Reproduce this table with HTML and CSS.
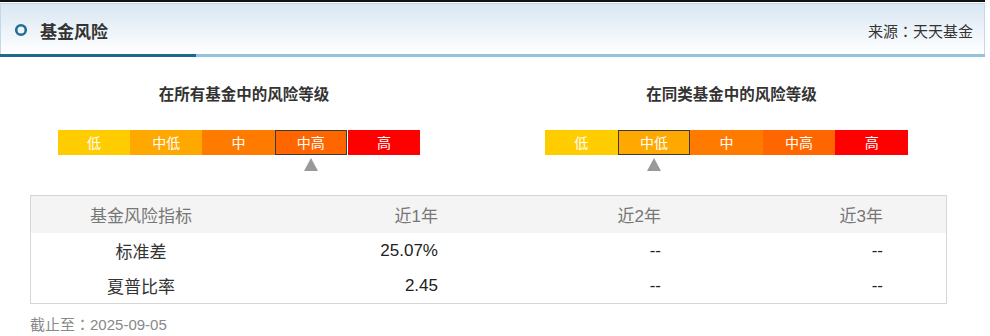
FILE: index.html
```html
<!DOCTYPE html>
<html lang="zh-CN">
<head>
<meta charset="utf-8">
<title>基金风险</title>
<link rel="stylesheet" href="styles.css">
</head>
<body>
<div class="page">
  <div class="topline"></div>
  <div class="header">
    <div class="title">
      <svg class="ring" width="14" height="14" viewBox="0 0 14 14"><circle cx="7" cy="7" r="4.8" fill="none" stroke="#246d92" stroke-width="2.6"/></svg>
      <span>基金风险</span>
    </div>
    <div class="source">来源<span class="colon" lang="zh-TW">：</span>天天基金</div>
  </div>
  <div class="rule"><div class="rule-dark"></div></div>

  <div class="levels">
    <div class="level">
      <div class="level-title">在所有基金中的风险等级</div>
      <div class="bar">
        <div class="seg s1">低</div>
        <div class="seg s2">中低</div>
        <div class="seg s3">中</div>
        <div class="seg s4 active gap">中高</div>
        <div class="seg s5">高</div>
      </div>
      <div class="marks">
        <div class="tri c4"></div>
      </div>
    </div>
    <div class="level level-b">
      <div class="level-title">在同类基金中的风险等级</div>
      <div class="bar">
        <div class="seg s1">低</div>
        <div class="seg s2 active">中低</div>
        <div class="seg s3">中</div>
        <div class="seg s4">中高</div>
        <div class="seg s5">高</div>
      </div>
      <div class="marks">
        <div class="tri c2"></div>
      </div>
    </div>
  </div>

  <div class="table">
    <div class="row head">
      <div class="cell name">基金风险指标</div>
      <div class="cell num">近1年</div>
      <div class="cell num">近2年</div>
      <div class="cell num">近3年</div>
    </div>
    <div class="row">
      <div class="cell name">标准差</div>
      <div class="cell num">25.07%</div>
      <div class="cell num">--</div>
      <div class="cell num">--</div>
    </div>
    <div class="row">
      <div class="cell name">夏普比率</div>
      <div class="cell num">2.45</div>
      <div class="cell num">--</div>
      <div class="cell num">--</div>
    </div>
  </div>
  <div class="date">截止至<span class="colon" lang="zh-TW">：</span>2025-09-05</div>
</div>
</body>
</html>
```

FILE: styles.css
```css
html, body {
  margin: 0;
  padding: 0;
  background: #fff;
}
body {
  font-family: "Liberation Sans", Arial, "Noto Sans CJK SC", sans-serif;
  color: #333;
}
.page {
  width: 985px;
}
.topline {
  height: 2px;
  background: #111;
  margin-bottom: 1px;
}
.header {
  height: 50px;
  border: 1px solid #c4d8e8;
  border-bottom: none;
  background: linear-gradient(#d9e6f2, #ffffff);
  display: flex;
  align-items: center;
  justify-content: space-between;
  padding: 0 11px 0 13px;
}
.title {
  display: flex;
  align-items: center;
  gap: 12px;
  font-size: 17px;
  font-weight: bold;
  color: #333;
  font-family: "Noto Sans CJK SC", sans-serif;
  padding-top: 2px;
}
.ring {
  display: block;
}
.source {
  font-size: 15px;
  color: #333;
  font-family: "Noto Sans CJK SC", sans-serif;
  padding-top: 2px;
}
.colon {
  font-family: "Noto Sans CJK TC", "Noto Sans CJK SC", sans-serif;
}
.rule {
  height: 3px;
  background: #96c2de;
}
.rule-dark {
  width: 196px;
  height: 3px;
  background: #1c6a8d;
}
.levels {
  display: flex;
  gap: 125px;
  padding-left: 58px;
  margin-top: 25px;
}
.level {
  width: 362px;
}
.level-b {
  width: 363px;
}
.level-title {
  text-align: center;
  font-size: 15.5px;
  font-weight: bold;
  color: #333;
  font-family: "Noto Sans CJK SC", sans-serif;
  line-height: 22px;
  padding-left: 10px;
  margin-bottom: 26px;
}
.bar {
  display: flex;
  height: 25px;
}
.seg {
  flex: 1 1 0;
  color: #fff;
  font-size: 14px;
  font-family: "Noto Sans CJK SC", sans-serif;
  line-height: 25px;
  text-align: center;
}
.s1 { background: #ffcc00; }
.s2 { background: #ffa800; }
.s3 { background: #ff7b00; }
.s4 { background: #ff6600; }
.s5 { background: #ff0000; }
.seg.active {
  box-shadow: inset 0 0 0 1px #3a3a3a;
}
.seg.gap {
  border-right: 1px solid #fff;
}
.marks {
  display: grid;
  grid-template-columns: repeat(5, 1fr);
  margin-top: 3px;
  height: 13px;
}
.tri {
  justify-self: center;
  width: 0;
  height: 0;
  border-left: 7px solid transparent;
  border-right: 7px solid transparent;
  border-bottom: 13px solid #999;
}
.c2 { grid-column: 2; }
.c4 { grid-column: 4; }
.table {
  margin: 24px 0 0 30px;
  width: 917px;
  box-sizing: border-box;
  border: 1px solid #d6d6d6;
}
.row {
  display: grid;
  grid-template-columns: 220px 250px 223px 222px;
  height: 35px;
  align-items: center;
}
.row.head {
  height: 37px;
  background: #f4f4f4;
  color: #777;
}
.cell {
  font-size: 17px;
}
.name {
  text-align: center;
  font-family: "Noto Sans CJK SC", sans-serif;
}
.head .cell {
  color: #777;
  font-family: "Liberation Sans", "Noto Sans CJK SC", sans-serif;
}
.num {
  text-align: right;
  padding-right: 63px;
  color: #222;
}
.date {
  margin: 10px 0 0 30px;
  font-size: 15px;
  line-height: 20px;
  color: #888;
  font-family: "Liberation Sans", "Noto Sans CJK SC", sans-serif;
}
```
